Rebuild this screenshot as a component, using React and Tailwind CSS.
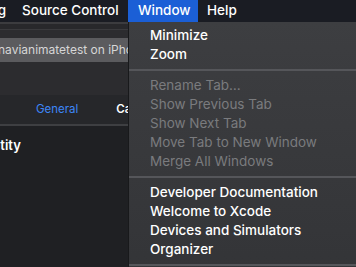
import React from "react";

const font = { fontFamily: "Inter, 'Liberation Sans', sans-serif" };

const MenuItem = ({ label, disabled }) => (
  <div
    className={`h-[19px] flex items-center pl-[21px] text-[13.5px] leading-none whitespace-nowrap ${
      disabled ? "text-[#7a7b7e] font-normal" : "text-white font-medium"
    }`}
  >
    {label}
  </div>
);

const Separator = () => (
  <div className="h-[12px] flex items-center">
    <div className="h-[2px] w-full bg-[#55565a]" />
  </div>
);

const App = () => {
  return (
    <div className="w-[356px] h-[267px] overflow-hidden bg-[#1f2023] flex flex-col" style={font}>
      {/* Menu bar */}
      <div className="h-[22px] shrink-0 bg-[#1a1c23] flex items-center text-white text-[13.5px] font-medium leading-none">
        <span className="w-[6px] overflow-hidden flex justify-end">g</span>
        <span className="ml-[16px] w-[106px]">Source Control</span>
        <span className="h-full w-[70px] bg-[#1b5fd6] flex items-center pl-[10px]">Window</span>
        <span className="ml-[9px]">Help</span>
      </div>

      {/* Content under the menu */}
      <div className="relative flex-1">
        <div className="flex flex-col">
          <div className="h-[2px] bg-[#3c3c3f]" />
          <div className="h-[6px] bg-[#28282b] border-b border-[#3a3a3d]" />
          <div className="h-[8px] bg-[#2c2c2f]" />
          <div className="h-[24px] bg-[#5b5b5e] w-[135px] flex items-center text-[12px] text-[#d6d6d6] whitespace-nowrap overflow-hidden">
            <span className="-ml-[2px]">navianimatetest on iPhone</span>
          </div>
          <div className="h-[33px] bg-[#2c2c2f]" />
          <div className="h-[31px] bg-[#26272a] border-b-2 border-[#3e3f42] flex items-center text-[11.5px]">
            <span className="ml-[36px] text-[#3d86f7]">General</span>
            <span className="ml-[38px] text-white font-semibold">Capabilities</span>
          </div>
          <div className="h-[40px] flex items-center text-[13px] text-white font-semibold">
            <span className="-ml-[27px]">Identity</span>
          </div>
        </div>

        {/* Window menu dropdown */}
        <div className="absolute left-[128px] top-0 w-[240px] h-[260px] bg-gradient-to-b from-[#3d3e41] to-[#333437] border-l border-[#18191b] pt-[4px]">
          <MenuItem label="Minimize" />
          <MenuItem label="Zoom" />
          <Separator />
          <MenuItem label="Rename Tab…" disabled />
          <MenuItem label="Show Previous Tab" disabled />
          <MenuItem label="Show Next Tab" disabled />
          <MenuItem label="Move Tab to New Window" disabled />
          <MenuItem label="Merge All Windows" disabled />
          <Separator />
          <MenuItem label="Developer Documentation" />
          <MenuItem label="Welcome to Xcode" />
          <MenuItem label="Devices and Simulators" />
          <MenuItem label="Organizer" />
          <Separator />
        </div>
      </div>
    </div>
  );
};

export default App;
